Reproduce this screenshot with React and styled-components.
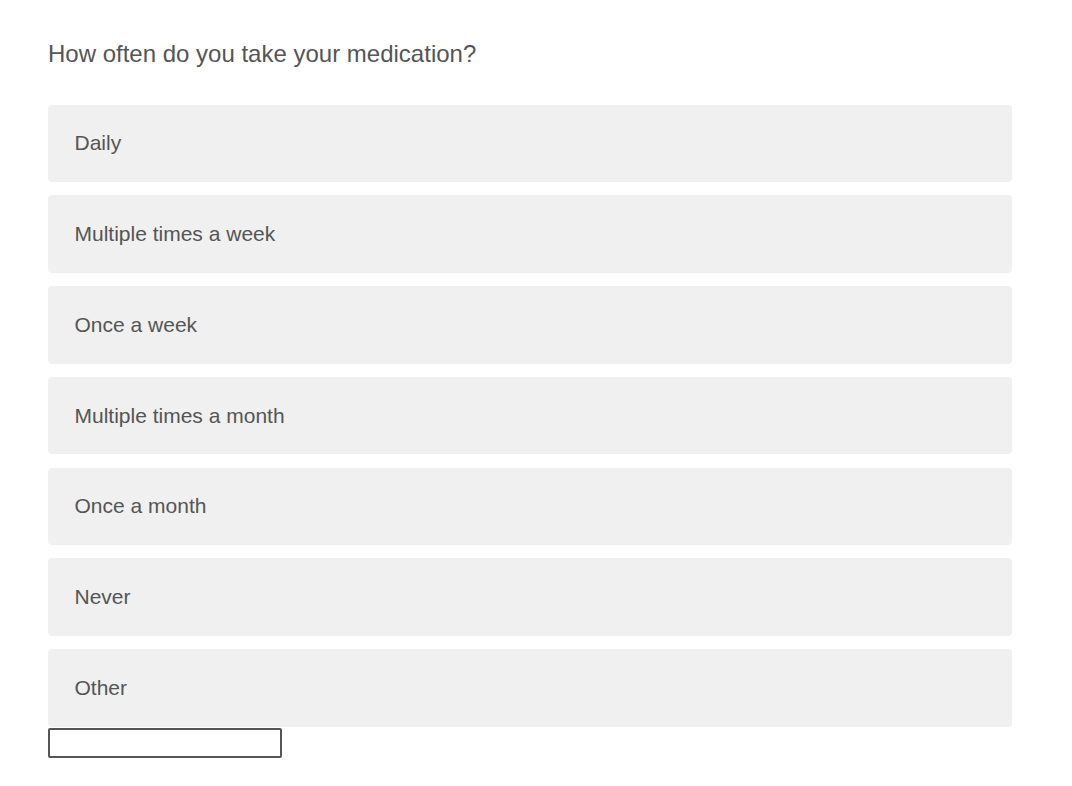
import React from "react";
import styled, { createGlobalStyle } from "styled-components";

const Global = createGlobalStyle`
  html, body { margin: 0; padding: 0; background: #ffffff; }
  body { font-family: "Liberation Sans", Arial, Helvetica, sans-serif; }
`;

const Page = styled.div`
  padding: 40px 60px 0 48px;
  width: 964px;
`;

const Question = styled.div`
  font-size: 24px;
  line-height: 27px;
  color: #555555;
  margin-bottom: 37.5px;
`;

const Options = styled.div`
  display: flex;
  flex-direction: column;
  gap: 13.3px;
`;

const Option = styled.div`
  height: 77.5px;
  display: flex;
  align-items: center;
  padding-left: 26.5px;
  background: #f0f0f0;
  border-radius: 4px;
  font-size: 21px;
  color: #555555;
  box-sizing: border-box;
`;

const OtherInput = styled.input`
  display: block;
  width: 234px;
  height: 30px;
  margin-top: 1.5px;
  box-sizing: border-box;
  border: 2px solid #555555;
  border-radius: 2px;
  background: #ffffff;
  padding: 0 6px;
  font-family: inherit;
  font-size: 16px;
  outline: none;
`;

const options = [
  "Daily",
  "Multiple times a week",
  "Once a week",
  "Multiple times a month",
  "Once a month",
  "Never",
  "Other",
];

export default function App() {
  return (
    <>
      <Global />
      <Page>
        <Question>How often do you take your medication?</Question>
        <Options>
          {options.map((o) => (
            <Option key={o}>{o}</Option>
          ))}
        </Options>
        <OtherInput type="text" />
      </Page>
    </>
  );
}
